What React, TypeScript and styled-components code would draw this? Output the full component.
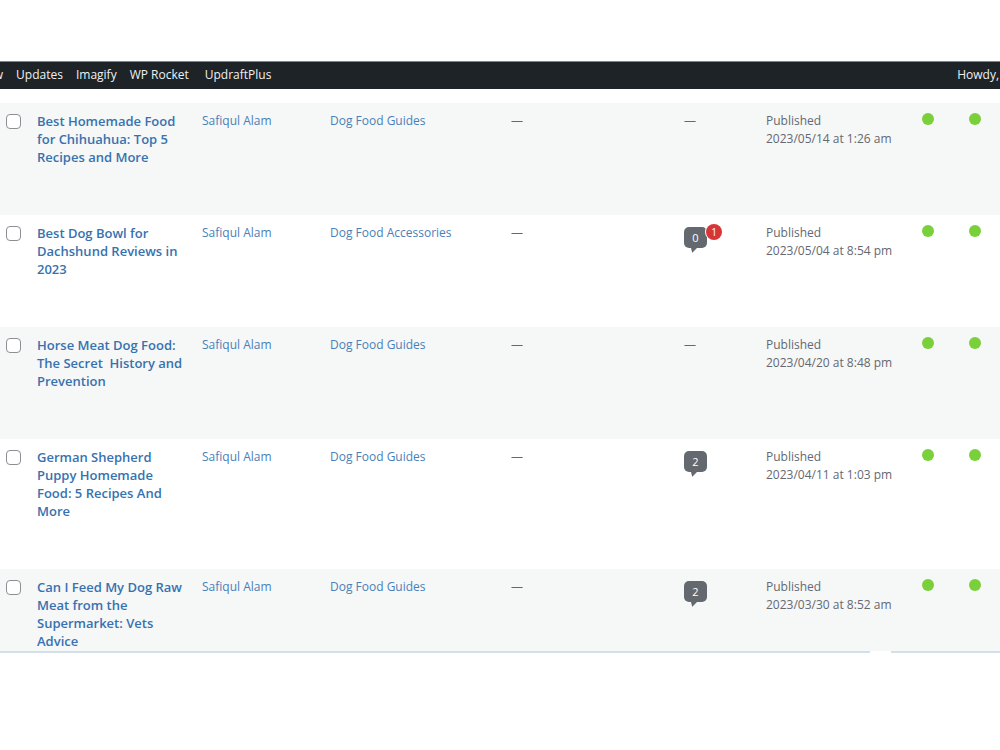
import React from "react";
import styled, { createGlobalStyle } from "styled-components";

const GlobalStyle = createGlobalStyle`
  *, *::before, *::after { box-sizing: border-box; }
  body {
    margin: 0;
    background: #fff;
    color: #646970;
    font-family: "Open Sans", "Noto Sans", sans-serif;
    font-size: 12px;
    line-height: 18px;
  }
`;

const Page = styled.div`
  padding: 61px 0 96px;
  overflow-x: hidden;
`;

const AdminBar = styled.header`
  display: flex;
  align-items: flex-start;
  justify-content: space-between;
  height: 28px;
  padding: 4px 1px 0 0;
  background: #1d2327;
  border-top: 1px solid #80868b;
  overflow: hidden;
`;

const BarMenu = styled.nav`
  display: flex;
  gap: 13px;
  margin-left: -22px;
`;

const BarLink = styled.a<{ $wide?: boolean }>`
  color: #f0f0f1;
  text-decoration: none;
  white-space: nowrap;
  padding-left: ${(p) => (p.$wide ? 3 : 0)}px;
`;

const ListPanel = styled.main`
  padding-top: 14px;
`;

const PostTable = styled.table`
  width: 100%;
  table-layout: fixed;
  border-collapse: collapse;
`;

const Column = styled.col<{ $share: number }>`
  width: ${(p) => p.$share}%;
`;

const PostRow = styled.tr`
  &:nth-child(odd) { background: #f6f7f7; }
`;

const Cell = styled.td`
  padding: 9px 8px 49px 10px;
  vertical-align: top;
  text-align: left;
  font-weight: 400;

  ${PostRow}:last-child > & { padding-bottom: 1px; }
`;

const CheckCell = styled(Cell)`
  padding-left: 6px;
  padding-right: 0;
`;

const DateCell = styled(Cell)`
  white-space: nowrap;
`;

const Check = styled.input`
  appearance: none;
  display: block;
  width: 15px;
  height: 15px;
  margin: 2px 0 0;
  border: 1px solid #8c8f94;
  border-radius: 4px;
  background: #fff;
  &:checked { background: #2271b1; }
`;

const TitleLink = styled.a`
  display: block;
  color: #3672b0;
  font-size: 13px;
  font-weight: 600;
  text-decoration: none;
  white-space: pre-wrap;
`;

const CellLink = styled.a`
  color: #4a80b8;
  text-decoration: none;
`;

const Bubble = styled.a`
  position: relative;
  display: block;
  width: 23px;
  margin-top: 3px;
  color: #fff;
  font-size: 11px;
  line-height: 21px;
  text-align: center;
  text-decoration: none;
`;

const Count = styled.span`
  display: block;
  height: 21px;
  border-radius: 5px;
  background: #646970;
`;

const Tail = styled.svg`
  display: block;
  margin-left: 7px;
`;

const Pending = styled.span`
  position: absolute;
  top: -3px;
  left: 22px;
  width: 16px;
  height: 16px;
  border-radius: 50%;
  background: #d63638;
  box-shadow: 0 0 0 1px #fff;
  font-size: 10px;
  line-height: 16px;
`;

const Score = styled.span`
  display: block;
  width: 12px;
  height: 12px;
  margin-top: 1px;
  border-radius: 50%;
  background: #7ad03a;
`;

const BottomEdge = styled.footer`
  display: flex;
  gap: 21px;
  height: 2px;
`;

const EdgeLine = styled.span<{ $grow: number }>`
  flex: ${(p) => p.$grow} 1 0;
  background: #d3e0ea;
`;

type Post = {
  title: string;
  category: string;
  comments?: number;
  pending?: number;
  date: string;
};

const columns = [2.7, 16.5, 12.8, 18.1, 17.3, 8.2, 15.6, 4.7, 4.1];

const posts: Post[] = [
  { title: "Best Homemade Food for Chihuahua: Top 5 Recipes and More", category: "Dog Food Guides", date: "2023/05/14 at 1:26 am" },
  { title: "Best Dog Bowl for Dachshund Reviews in 2023", category: "Dog Food Accessories", comments: 0, pending: 1, date: "2023/05/04 at 8:54 pm" },
  { title: "Horse Meat Dog Food: The Secret  History and Prevention", category: "Dog Food Guides", date: "2023/04/20 at 8:48 pm" },
  { title: "German Shepherd Puppy Homemade Food: 5 Recipes And More", category: "Dog Food Guides", comments: 2, date: "2023/04/11 at 1:03 pm" },
  { title: "Can I Feed My Dog Raw Meat from the Supermarket: Vets Advice", category: "Dog Food Guides", comments: 2, date: "2023/03/30 at 8:52 am" },
];

function Comments({ count, pending }: { count?: number; pending?: number }) {
  if (count === undefined) return <>—</>;
  return (
    <Bubble href="#comments">
      <Count>{count}</Count>
      <Tail width="8" height="5" viewBox="0 0 8 5" aria-hidden="true">
        <path d="M0 0H6L1.5 4.5Q1 5 1 4Z" fill="#646970" />
      </Tail>
      {pending ? <Pending>{pending}</Pending> : null}
    </Bubble>
  );
}

export default function App() {
  return (
    <Page>
      <GlobalStyle />
      <AdminBar>
        <BarMenu>
          <BarLink href="#new">New</BarLink>
          <BarLink href="#updates">Updates</BarLink>
          <BarLink href="#imagify">Imagify</BarLink>
          <BarLink href="#rocket">WP Rocket</BarLink>
          <BarLink href="#updraft" $wide>UpdraftPlus</BarLink>
        </BarMenu>
        <BarLink href="#profile">Howdy,</BarLink>
      </AdminBar>
      <ListPanel>
        <PostTable>
          <colgroup>
            {columns.map((share, i) => <Column key={i} $share={share} />)}
          </colgroup>
          <tbody>
            {posts.map((post) => (
              <PostRow key={post.title}>
                <CheckCell>
                  <Check type="checkbox" aria-label={`Select ${post.title}`} />
                </CheckCell>
                <Cell as="th" scope="row"><TitleLink href="#edit">{post.title}</TitleLink></Cell>
                <Cell><CellLink href="#author">Safiqul Alam</CellLink></Cell>
                <Cell><CellLink href="#category">{post.category}</CellLink></Cell>
                <Cell>—</Cell>
                <Cell><Comments count={post.comments} pending={post.pending} /></Cell>
                <DateCell>Published<br />{post.date}</DateCell>
                <Cell><Score role="img" aria-label="SEO: good" /></Cell>
                <Cell><Score role="img" aria-label="Readability: good" /></Cell>
              </PostRow>
            ))}
          </tbody>
        </PostTable>
        <BottomEdge>
          <EdgeLine $grow={8} />
          <EdgeLine $grow={1} />
        </BottomEdge>
      </ListPanel>
    </Page>
  );
}
